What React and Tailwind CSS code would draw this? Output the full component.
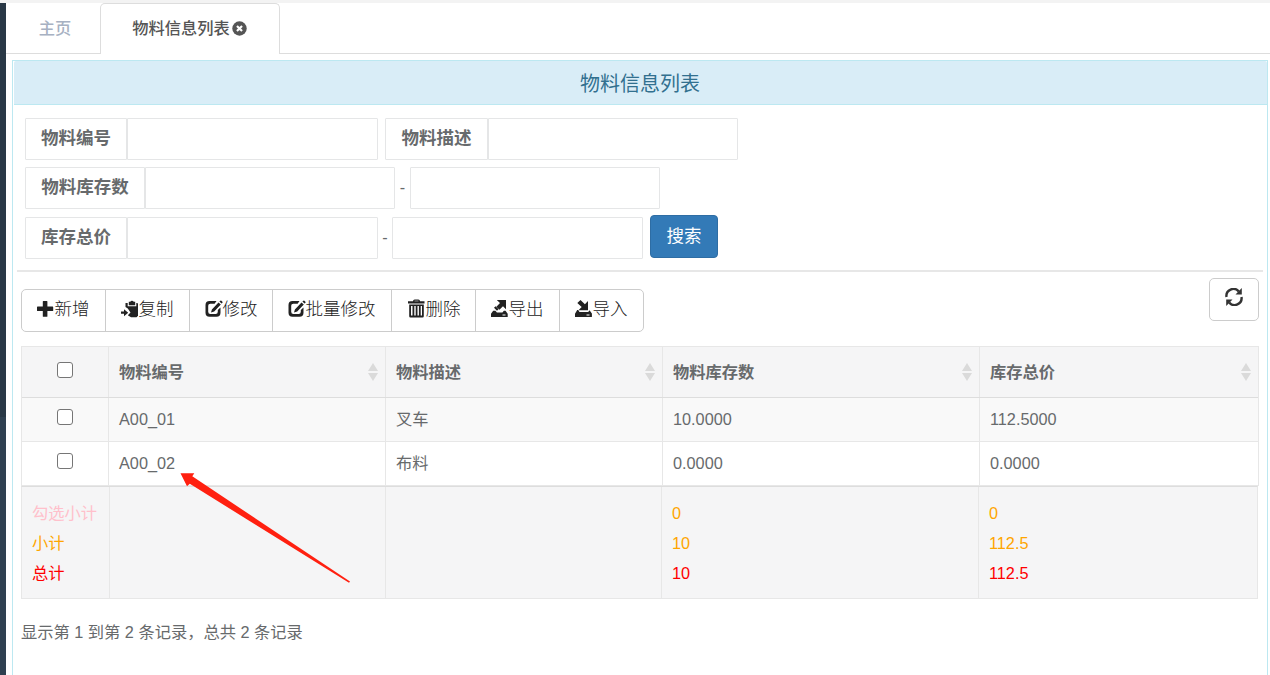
import React from "react";

function Glyph({ children, className = "" }) {
  return (
    <svg viewBox="0 0 18 18" className={"h-[18px] w-[18px] shrink-0 " + className} fill="currentColor">
      {children}
    </svg>
  );
}

const icons = {
  plus: (
    <Glyph>
      <path d="M6.4 1h3.4q.6 0 .6.6v5h5.2q.6 0 .6.6v3.2q0 .6-.6.6h-5.2v5.2q0 .6-.6.6H6.400q-.6 0-.6-.6V11H.6q-.6 0-.6-.6V7.200q0-.6.6-.6h5.200v-5q0-.6.6-.6z" />
    </Glyph>
  ),
  paste: (
    <Glyph>
      <path d="M7.800 1.800h1.500a1.900 1.900 0 0 1 3.400 0h1.500v3.400H7.800zM4.500 3h2.200v3.300h8.600V3h1l.7.800v12L15.500 17.200H10L6.800 15.200 9.500 12.500 6.800 8.500 4.500 7z" />
      <path d="M0 11.600h3V9.200l4.200 3.500L3 16.200v-2.400H0z" />
    </Glyph>
  ),
  edit: (
    <Glyph>
      <path fillRule="evenodd" d="M4.500 1h7L9.600 3.700H5.300Q3.200 3.700 3.200 5.800v6q0 2.200 2.200 2.200h5.200q2.200 0 2.200-2.200V10l2.700-2.400v5.100q0 4-4 4h-7q-4 0-4-4V5q0-4 4-4z" />
      <path d="M13.500 2.600l2.300 2-6.600 7-3.200 1 .9-3.200zM14.400 1.600l1-.9q.5-.4 1 0l1 1q.5.5 0 1l-.9.9z" />
    </Glyph>
  ),
  trash: (
    <Glyph className="overflow-visible">
      <path fillRule="evenodd" d="M5 1.200Q5-.5 6.700-.5h3.600Q12-.5 12 1.200h4.500v2.300H0V1.200zm1.500 0h4V.8h-4zM1.200 4.500h14.600v11.700q0 1.300-1.300 1.300H2.500q-1.300 0-1.300-1.300zM3 6v9.500h1.500V6zm3.300 0v9.500h1.400V6zm3.200 0v9.500h1.400V6zm3.200 0v9.500H14V6z" />
    </Glyph>
  ),
  out: (
    <Glyph>
      <path d="M5.800 0H15v9.300l-3-3-3.600 3.500-3-3L9 3zM3 7.800l1.600-1.500L7.500 9.300 6 10.800z" />
      <path fillRule="evenodd" d="M2.200 10.800h2.200l1.500 1.700h5.500l1.500-1.700H14.500l2.200 2.900V17H0v-3.300zM11.500 14.500v1h3v-1z" />
    </Glyph>
  ),
  into: (
    <Glyph>
      <path d="M5.500 0l4.400 4.200L13 1v9.300H3.500l3.200-3.200L2.300 3z" />
      <path fillRule="evenodd" d="M2.200 10h1L4.500 12h8.700l1.200-1.500h.3l2.200 3V17H0v-3.300zM11.500 14.500v1h3v-1z" />
    </Glyph>
  ),
};

function Field({ label, labelW, inputW }) {
  return (
    <div className="flex h-[42px]">
      <div className={"flex items-center justify-center rounded-l-[1px] border border-[#e5e6e7] pb-px text-[17.5px] font-bold " + labelW}>
        {label}
      </div>
      <input className={"rounded-r-[1px] border border-[#e5e6e7] outline-none " + inputW} />
    </div>
  );
}

function Tool({ icon, text, className }) {
  return (
    <button className={"flex items-center border-[#ccc] pb-[3px] pl-[15px] " + className}>
      {icons[icon]}
      <span className="-ml-[0.5px] whitespace-nowrap pt-px">{text}</span>
    </button>
  );
}

function Sorter() {
  return (
    <svg viewBox="0 0 10 18" className="h-[18px] w-[10px]" fill="#dadada">
      <path d="M5 0l5 8H0zM5 18l5-8H0z" />
    </svg>
  );
}

function Check() {
  return <input type="checkbox" className="h-4 w-4 appearance-none rounded-[3px] border border-[#767676] bg-white" />;
}

const rows = [
  ["A00_01", "叉车", "10.0000", "112.5000"],
  ["A00_02", "布料", "0.0000", "0.0000"],
];

export default function App() {
  return (
    <div
      className="relative flex h-[675px] w-[1270px] flex-col overflow-hidden bg-white text-[16.25px] leading-[23px] text-[#676a6c]"
      style={{ fontFamily: '"Liberation Sans", "Noto Sans CJK SC", sans-serif' }}
    >
      <div className="h-[3px] shrink-0 bg-[#f3f3f3]" />
      <div className="flex flex-1">
        <aside className="flex w-1.5 shrink-0 flex-col bg-[#2f4050]">
          <div className="h-[414px] bg-[#293846]" />
        </aside>
        <main className="flex flex-1 flex-col">
          <nav className="flex h-[51px] shrink-0">
            <div className="flex w-[94px] items-center justify-center border-b border-[#ddd] pl-1 font-medium text-[#a7b1c2]">主页</div>
            <div className="flex w-[180px] items-center justify-center rounded-t-[5px] border border-b-0 border-[#ddd] pb-0.5 pr-px font-medium text-[#555]">
              物料信息列表
              <svg viewBox="0 0 16 16" className="ml-[2px] h-[15px] w-[15px]">
                <circle cx="8" cy="8" r="7.700" fill="#555" />
                <path d="M5.300 5.300l5.400 5.400M10.700 5.300l-5.400 5.400" stroke="#fff" strokeWidth="2.300" />
              </svg>
            </div>
            <div className="flex-1 border-b border-[#ddd]" />
          </nav>
          <section className="mt-1.5 ml-1.5 mr-0.5 flex flex-1 flex-col border border-b-0 border-[#bce8f1]">
            <h1 className="ml-px h-[44px] shrink-0 rounded-t-[2px] border-b border-[#bce8f1] bg-[#d9edf7] pr-px pt-px text-center text-[20px] leading-[44px] text-[#31708f]">
              物料信息列表
            </h1>
            <div className="ml-[12px] mt-[13px] flex gap-[7px]">
              <Field label="物料编号" labelW="w-[102px]" inputW="w-[251px]" />
              <Field label="物料描述" labelW="w-[103px]" inputW="w-[250px]" />
            </div>
            <div className="ml-[12px] mt-[7px] flex">
              <Field label="物料库存数" labelW="w-[120px]" inputW="w-[250px]" />
              <span className="w-[15px] text-center leading-[41px]">-</span>
              <input className="h-[42px] w-[250px] rounded-[1px] border border-[#e5e6e7]" />
            </div>
            <div className="ml-[12px] mt-[6px] flex h-[44px]">
              <div className="flex pt-[2px]">
                <Field label="库存总价" labelW="w-[102px]" inputW="w-[251px]" />
                <span className="w-[14px] text-center leading-[41px]">-</span>
                <input className="h-[42px] w-[251px] rounded-[1px] border border-[#e5e6e7]" />
              </div>
              <button className="ml-[7px] h-[43px] w-[68px] rounded-[4px] border border-[#2e6da4] bg-[#337ab7] text-[17.5px] text-white">
                搜索
              </button>
            </div>
            <div className="ml-1 mr-1 mt-[11px] h-[2px] shrink-0 bg-[#e7e7e7]" />
            <div className="mx-2 flex h-[74px] shrink-0 justify-between">
              <div className="mt-[17px] flex h-[43px] overflow-hidden rounded-[5px] border border-[#ccc] text-[17.5px] font-light text-[#222]">
                <Tool icon="plus" text="新增" className="w-[84px] border-r" />
                <Tool icon="paste" text="复制" className="w-[84px] border-r" />
                <Tool icon="edit" text="修改" className="w-[83px] border-r" />
                <Tool icon="edit" text="批量修改" className="w-[119px] border-r" />
                <Tool icon="trash" text="删除" className="w-[84px] border-r pl-[16px]" />
                <Tool icon="out" text="导出" className="w-[84px] border-r" />
                <Tool icon="into" text="导入" className="w-[83px]" />
              </div>
              <button className="mt-[6px] flex h-[43px] w-[50px] items-center justify-center rounded-[5px] border border-[#ccc] pb-[5px] text-[#333]">
                <Glyph>
                  <path d="M1.500 9A7 7 0 0 1 13.800 3.500" fill="none" stroke="currentColor" strokeWidth="2.400" />
                  <path d="M16.500 9A7 7 0 0 1 4.200 14.500" fill="none" stroke="currentColor" strokeWidth="2.400" />
                  <path d="M16.800 0v6.500h-6.300zM1.200 18v-6.500h6.300z" />
                </Glyph>
              </button>
            </div>
            <div className="mx-2 flex w-[1238px] shrink-0 flex-col border border-b-0 border-[#e7e7e7]">
              <div className="grid h-[51px] grid-cols-[87px_277px_277px_317px_278px] border-b border-[#ddd] bg-[#f5f5f6] font-bold">
                <div className="flex items-center justify-center border-r border-[#e7e7e7] pb-[5px]"><Check /></div>
                {["物料编号", "物料描述", "物料库存数", "库存总价"].map((t) => (
                  <div key={t} className="flex items-center justify-between border-r border-[#e7e7e7] pl-[10px] pr-[7px] last:border-r-0">
                    {t}
                    <Sorter />
                  </div>
                ))}
              </div>
              {rows.map((r) => (
                <div key={r[0]} className="grid h-[44px] grid-cols-[87px_277px_277px_317px_278px] border-b border-[#e7e7e7] odd:bg-white even:bg-[#f9f9f9]">
                  <div className="flex items-center justify-center border-r border-[#e7e7e7] pb-[5px]"><Check /></div>
                  {r.map((t, i) => (
                    <div key={i} className="flex items-center border-r border-[#e7e7e7] pl-[10px] last:border-r-0">{t}</div>
                  ))}
                </div>
              ))}
            </div>
            <div className="ml-2 grid h-[113px] w-[1237px] shrink-0 grid-cols-[88px_276px_276px_317px_278px] border border-[#e7e7e7] border-t-[#ddd] bg-[#f5f5f6] leading-[30px]">
              <div className="border-r border-[#e7e7e7] pl-[10px] pt-[11px]">
                <div className="whitespace-nowrap text-[#ffc0cb]">勾选小计</div>
                <div className="text-[#ffa500]">小计</div>
                <div className="text-[#ff0000]">总计</div>
              </div>
              <div className="border-r border-[#e7e7e7]" />
              <div className="border-r border-[#e7e7e7]" />
              {[["0", "10", "10"], ["0", "112.5", "112.5"]].map((c) => (
                <div key={c[1]} className="border-r border-[#e7e7e7] pl-[10px] pt-[11px] text-[#ffa500] last:border-r-0">
                  <div>{c[0]}</div>
                  <div>{c[1]}</div>
                  <div className="text-[#ff0000]">{c[2]}</div>
                </div>
              ))}
            </div>
            <p className="ml-2 mt-[22px]">显示第 1 到第 2 条记录，总共 2 条记录</p>
          </section>
        </main>
      </div>
      <svg className="absolute left-[178px] top-[470px] h-[116px] w-[176px]" viewBox="178 470 176 116">
        <path d="M180.500 473.300L194.300 473.300 192.300 476.300 350 581.500 349 582.800 189.800 483.800 187 486.300z" fill="#ff2010" />
      </svg>
    </div>
  );
}
